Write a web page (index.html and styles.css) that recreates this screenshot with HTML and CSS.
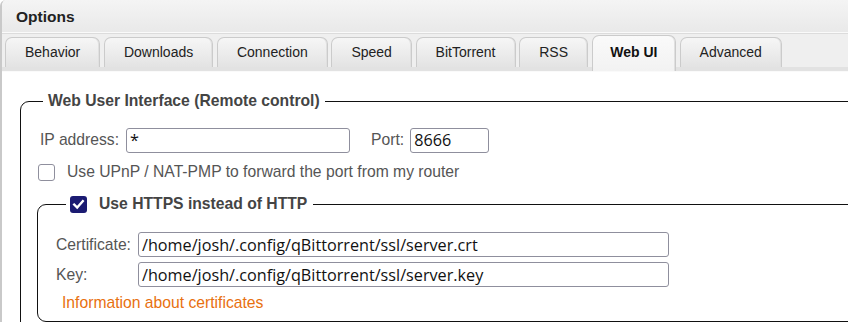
FILE: index.html
```html
<!DOCTYPE html>
<html>
<head>
<meta charset="utf-8">
<link rel="stylesheet" href="styles.css">
</head>
<body>
<div class="window">
  <div class="titlebar">Options</div>
  <div class="tabstrip">
    <div class="tab">Behavior</div>
    <div class="tab">Downloads</div>
    <div class="tab">Connection</div>
    <div class="tab">Speed</div>
    <div class="tab">BitTorrent</div>
    <div class="tab">RSS</div>
    <div class="tab active">Web UI</div>
    <div class="tab">Advanced</div>
  </div>
  <div class="content">
    <fieldset class="group outer">
      <legend class="legend">Web User Interface (Remote control)</legend>
      <div class="row iprow">
        <label class="label">IP address:</label>
        <span class="input ip">*</span>
        <label class="label port-label">Port:</label>
        <span class="input port">8666</span>
      </div>
      <div class="row checkrow">
        <span class="checkbox"></span>
        <span class="label">Use UPnP / NAT-PMP to forward the port from my router</span>
      </div>
      <fieldset class="group inner">
        <legend class="legend check-legend">
          <span class="checkbox checked"><svg viewBox="0 0 17 17" width="17" height="17"><path d="M4.2 8.6 L7.2 11.6 L12.8 5.2" fill="none" stroke="#fff" stroke-width="2.4" stroke-linecap="square"/></svg></span>
          <span>Use HTTPS instead of HTTP</span>
        </legend>
        <div class="pathgrid">
          <label class="label">Certificate:</label>
          <span class="input path">/home/josh/.config/qBittorrent/ssl/server.crt</span>
          <label class="label">Key:</label>
          <span class="input path">/home/josh/.config/qBittorrent/ssl/server.key</span>
        </div>
        <div class="info">Information about certificates</div>
      </fieldset>
    </fieldset>
  </div>
</div>
</body>
</html>
```

FILE: styles.css
```css
html, body {
  margin: 0;
  padding: 0;
  background: #ffffff;
}
body {
  width: 848px;
  height: 322px;
  overflow: hidden;
  font-family: "Liberation Sans", Arial, sans-serif;
}
.window {
  border-left: 2px solid #c9c9c9;
  border-top-left-radius: 6px;
  height: 322px;
  overflow: hidden;
}
.titlebar {
  height: 32px;
  line-height: 33px;
  padding-left: 14px;
  font-size: 15.5px;
  font-weight: bold;
  color: #222;
  background: linear-gradient(#f4f4f4, #e9e9e9);
  border-bottom: 1px solid #fafafa;
}
.tabstrip {
  display: flex;
  gap: 3.7px;
  align-items: flex-end;
  padding: 0 0 0 3px;
  height: 33px;
  background: #efefef;
  border-bottom: 4px solid #e2e2e2;
  border-top: 1px solid #dcdcdc;
}
.tab {
  height: 29px;
  line-height: 28px;
  padding: 0 19px;
  font-size: 14px;
  color: #222;
  border: 1px solid #cbcbcb;
  border-bottom: none;
  border-radius: 7px 7px 0 0;
  background: linear-gradient(#f6f6f6, #e3e3e3);
  box-shadow: inset -1px 0 0 #e0e0e0;
}
.tab.active {
  height: 33px;
  line-height: 32px;
  margin-bottom: -4px;
  padding: 0 17.5px 2px;
  font-weight: bold;
  color: #111;
  background: linear-gradient(#fafafa, #f2f2f2);
}
.content {
  border-top: 1px solid #fafafa;
  padding: 20px 0 0 18px;
}
.group {
  margin: 0;
  border: 1px solid #111;
  border-radius: 9px;
  min-width: 0;
}
.outer {
  width: 900px;
  padding: 4px 0 40px 19px;
}
.legend {
  font-size: 15.7px;
  font-weight: bold;
  color: #444;
  padding: 0 5px 0 5px;
  margin-left: 3px;
}
.row {
  display: flex;
  align-items: center;
}
.label {
  font-size: 15.7px;
  color: #555;
}
.iprow {
  height: 26px;
  margin-top: 13px;
}
.input {
  box-sizing: border-box;
  display: flex;
  align-items: center;
  height: 25px;
  border: 1px solid #8f8f9d;
  border-radius: 3px;
  padding: 0 3px;
  font-family: "Open Sans", "DejaVu Sans", sans-serif;
  font-size: 16.2px;
  color: #111;
  background: #fff;
}
.ip {
  width: 224px;
  margin-left: 7px;
}
.port-label {
  margin-left: 21px;
}
.port {
  width: 79px;
  margin-left: 6px;
}
.checkrow {
  height: 18px;
  margin-top: 10px;
  margin-left: -2px;
}
.checkbox {
  box-sizing: border-box;
  display: inline-flex;
  width: 17px;
  height: 17px;
  border: 1px solid #8f8f9d;
  border-radius: 3px;
  background: #fff;
  margin-right: 12px;
  flex-shrink: 0;
}
.checkbox.checked {
  border: none;
  background: #1b1b72;
  margin-right: 12px;
}
.inner {
  width: 900px;
  margin: 14px 0 0 -3px;
  padding: 19px 0 9px 18px;
}
.check-legend {
  display: flex;
  align-items: center;
  margin-left: 10px;
  padding: 0 6px 0 4px;
}
.pathgrid {
  display: grid;
  grid-template-columns: 82px 531px;
  row-gap: 5px;
  align-items: center;
}
.path {
  height: 25px;
}
.info {
  margin-top: 7px;
  margin-left: 6px;
  font-size: 15.7px;
  color: #e8700f;
}
```
